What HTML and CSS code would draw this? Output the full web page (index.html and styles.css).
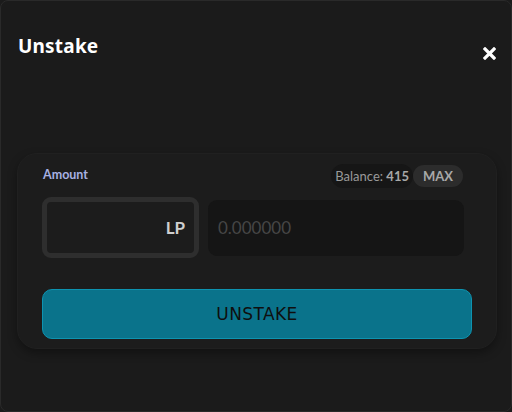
FILE: index.html
```html
<!DOCTYPE html>
<html>
<head>
<meta charset="utf-8">
<link rel="stylesheet" href="styles.css">
</head>
<body>
<div class="modal">
  <div class="header">
    <h1 class="title">Unstake</h1>
    <button class="close" aria-label="Close">
      <svg width="13" height="13" viewBox="0 0 13 13"><path d="M2 2 L11 11 M11 2 L2 11" stroke="#fff" stroke-width="3.2" stroke-linecap="square"/></svg>
    </button>
  </div>
  <div class="card">
    <div class="amount-row">
      <span class="label">Amount</span>
      <div class="balance-group">
        <span class="balance">Balance: <b>415</b></span>
        <button class="max">MAX</button>
      </div>
    </div>
    <div class="input-row">
      <div class="token">LP</div>
      <input class="amount" type="text" placeholder="0.000000">
    </div>
    <button class="submit">UNSTAKE</button>
  </div>
</div>
</body>
</html>
```
FILE: styles.css
```css
* { box-sizing: border-box; }
html, body { margin: 0; padding: 0; background: #1b1b1b; }
body { font-family: "Lato", "Noto Sans", sans-serif; }
.modal {
  width: 512px;
  height: 412px;
  border: 1px solid #2a2a2a;
  border-radius: 8px;
  background: #1b1b1b;
  padding: 31px 14px 0 16px;
}
.header {
  display: flex;
  justify-content: space-between;
  align-items: flex-start;
  padding-left: 1px;
  height: 121px;
}
.title {
  margin: 0;
  font-family: "Noto Sans", sans-serif;
  font-size: 19px;
  line-height: 28px;
  font-weight: 700;
  color: #fff;
  letter-spacing: 0.2px;
}
.close {
  margin-top: 15px;
  margin-right: 1px;
  background: none;
  border: 0;
  padding: 0;
  width: 13px;
  height: 13px;
  display: flex;
}
.card {
  width: 480px;
  height: 196px;
  border: 1px solid #202020;
  border-radius: 20px;
  background: #1c1c1c;
  box-shadow: 0 4px 10px rgba(0,0,0,0.35);
  padding: 9px 25px 0 24px;
}
.amount-row {
  display: flex;
  justify-content: space-between;
  align-items: center;
  width: 421px;
  height: 26px;
}
.label {
  color: #a7b1e3;
  font-size: 12.5px;
  font-weight: 700;
  padding-left: 1px;
  padding-bottom: 3px;
}
.balance-group { display: flex; align-items: center; }
.balance {
  background: #161616;
  color: #9a9a9a;
  font-size: 13px;
  border-radius: 12px;
  padding: 4px 4px 4px 4px;
  height: 24px;
  line-height: 16px;
}
.balance b { color: #a8a8a8; }
.max {
  background: #2c2c2c;
  color: #a8a8a8;
  border: 0;
  font-family: inherit;
  font-size: 13px;
  font-weight: 700;
  border-radius: 11px;
  height: 22px;
  padding: 0 10px;
}
.input-row {
  display: flex;
  gap: 9px;
  margin-top: 8px;
  width: 423px;
  align-items: center;
}
.token {
  width: 157px;
  height: 61px;
  border: 5px solid #2e2e2e;
  border-radius: 9px;
  display: flex;
  align-items: center;
  justify-content: flex-end;
  padding-right: 9px;
  color: #cfcfcf;
  font-size: 17px;
  font-weight: 700;
}
.amount {
  width: 256px;
  height: 56px;
  background: #151515;
  border: 0;
  border-radius: 9px;
  padding: 0 10px;
  font-family: inherit;
  font-size: 17px;
  color: #ccc;
  outline: none;
}
.amount::placeholder { color: #464646; }
.submit {
  display: block;
  margin-top: 31px;
  width: 430px;
  height: 50px;
  background: #0a738b;
  border: 1px solid #0d93b0;
  border-radius: 10px;
  color: #0f0f0f;
  font-family: "DejaVu Sans", sans-serif;
  font-size: 17px;
  letter-spacing: 0.4px;
}
```
